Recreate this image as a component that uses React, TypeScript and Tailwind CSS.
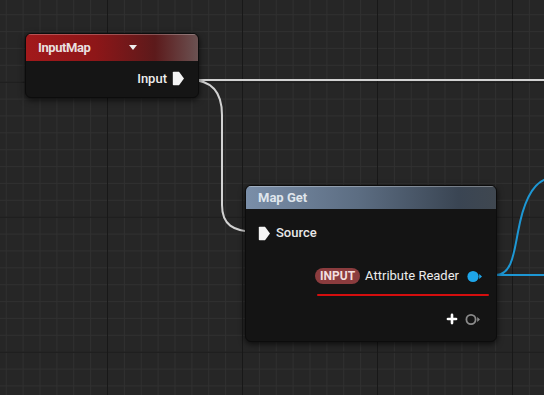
import { Plus } from 'lucide-react'

const font = "font-['Roboto','Liberation_Sans',sans-serif]"

function ExecPin({ className = '' }: { className?: string }) {
  return (
    <svg width="13" height="15" viewBox="0 0 13 15" className={className}>
      <path d="M1.6 0.8 H7 L12 7.5 L7 14.2 H1.6 Q0.8 14.2 0.8 13.4 V1.6 Q0.8 0.8 1.6 0.8 Z" fill="#f4f4f4" />
    </svg>
  )
}

function DataPin({ color, filled = true }: { color: string; filled?: boolean }) {
  return (
    <svg width="16" height="13" viewBox="0 0 16 13">
      {filled ? (
        <circle cx="6" cy="6.5" r="5.6" fill={color} />
      ) : (
        <circle cx="6" cy="6.5" r="4.6" fill="none" stroke={color} strokeWidth="1.8" />
      )}
      <path d="M12.2 4 L15 6.5 L12.2 9 Z" fill={color} />
    </svg>
  )
}

/** Wires sit on the canvas under the nodes. */
function Wires() {
  return (
    <svg width="544" height="395" className="absolute left-0 top-0" fill="none">
      <path d="M184 80 H544" stroke="#d2d2d2" strokeWidth="2" />
      <path
        d="M190 80 C212 80 222 92 222 115 V205 C222 224 232 232 258 232"
        stroke="#d2d2d2"
        strokeWidth="2"
      />
      <path d="M480 275 H544" stroke="#1d97d4" strokeWidth="2" />
      <path d="M496 275 C512 275 514 252 518 232 C523 204 531 184 546 179" stroke="#1d97d4" strokeWidth="2" />
    </svg>
  )
}

function InputMapNode() {
  return (
    <div className="absolute left-[25px] top-[33px] flex h-[65px] w-[174px] flex-col overflow-hidden rounded-[6px] border border-[#0c0c0c] bg-[#151515] shadow-[0_2px_6px_rgba(0,0,0,0.7)]">
      <div className="flex h-[27px] items-center gap-[38px] bg-[linear-gradient(to_right,#a2191b_0%,#8e1618_40%,#5c1a1b_75%,#6b5252_100%)] pl-[12px] shadow-[inset_0_1px_0_rgba(255,255,255,0.25)]">
        <span className="text-[13px] font-bold tracking-[-0.4px] text-[#e8dfdf]">InputMap</span>
        <svg width="8" height="5" viewBox="0 0 8 5">
          <path d="M0 0 H8 L4 5 Z" fill="#eeeeee" />
        </svg>
      </div>
      <div className="flex flex-1 items-start justify-end gap-[5px] pr-[13px] pt-[10px]">
        <span className="text-[13px] font-medium leading-[15px] text-[#ececec]">Input</span>
        <ExecPin />
      </div>
    </div>
  )
}

function MapGetNode() {
  return (
    <div className="absolute left-[245px] top-[185px] flex h-[157px] w-[252px] flex-col overflow-hidden rounded-[6px] border border-[#0c0c0c] bg-[#141414] shadow-[0_2px_6px_rgba(0,0,0,0.7)]">
      <div className="flex h-[23px] items-center bg-[linear-gradient(to_right,#7a8ea8_0%,#5c6d82_45%,#3a4553_85%,#3f4750_100%)] pl-[12px] shadow-[inset_0_1px_0_rgba(255,255,255,0.3)]">
        <span className="text-[13px] font-bold text-[#dfe5ec]">Map Get</span>
      </div>

      <div className="flex flex-col pt-[14px]">
        <div className="flex h-[20px] items-center gap-[5px] pl-[12px]">
          <ExecPin />
          <span className="text-[13px] font-medium text-[#e8e8e8]">Source</span>
        </div>

        <div className="mt-[23px] flex h-[20px] items-center justify-end pr-[13px]">
          <span className="mr-[5px] rounded-full bg-[#8b3c3e] px-[5px] text-[12px] font-bold leading-[16px] text-[#f2dede]">
            INPUT
          </span>
          <span className="mr-[8px] text-[13px] text-[#ececec]">Attribute Reader</span>
          <DataPin color="#1ea6ea" />
        </div>

        <div className="ml-[71px] mt-[8px] h-[2px] w-[172px] rounded-full bg-[#d40e0e]" />

        <div className="mt-[15px] flex h-[16px] items-center justify-end gap-[6px] pr-[15px]">
          <Plus className="h-[14px] w-[14px] text-white" strokeWidth={4.5} />
          <DataPin color="#8a8a8a" filled={false} />
        </div>
      </div>
    </div>
  )
}

export default function App() {
  return (
    <div
      className={`${font} relative h-[395px] w-[544px] overflow-hidden bg-[#262626] bg-[linear-gradient(to_right,#181818_1px,transparent_1px),linear-gradient(to_bottom,#181818_1px,transparent_1px),linear-gradient(to_right,#303030_1px,transparent_1px),linear-gradient(to_bottom,#303030_1px,transparent_1px)] bg-[size:135px_135px,135px_135px,16.875px_16.875px,16.875px_16.875px] bg-[position:107px_81.7px,107px_81.7px,5.75px_14.2px,5.75px_14.2px]`}
    >
      <Wires />
      <InputMapNode />
      <MapGetNode />
    </div>
  )
}
